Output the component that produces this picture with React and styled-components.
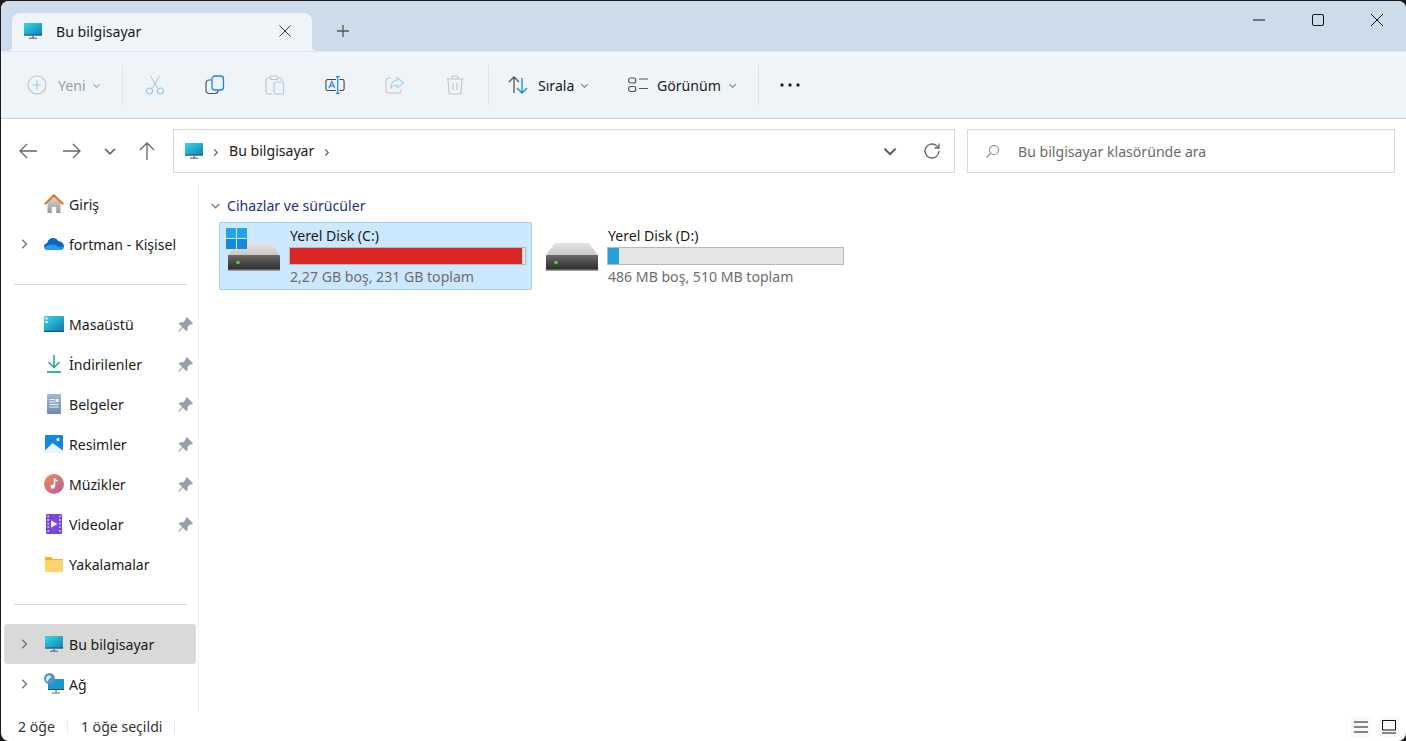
import React from "react";
import styled, { createGlobalStyle } from "styled-components";

const Global = createGlobalStyle`
  html, body {
    margin: 0;
    padding: 0;
    height: 100%;
    background: #1c1c1c;
    overflow: hidden;
  }
  * {
    box-sizing: border-box;
  }
`;

const Win = styled.div`
  margin: 1px 0 0 1px;
  width: 1405px;
  height: 740px;
  background: #fff;
  border-radius: 8px;
  overflow: hidden;
  display: flex;
  flex-direction: column;
  font-family: "Noto Sans", "Open Sans", sans-serif;
  font-size: 14.1px;
  color: #1a1a1a;
`;

const TitleBar = styled.div`
  height: 50px;
  flex: none;
  background: #cddcea;
  display: flex;
  align-items: flex-end;
  padding-left: 11px;
`;

const Tab = styled.div`
  position: relative;
  width: 300px;
  height: 38px;
  background: #eff4f9;
  border-radius: 8px 8px 0 0;
  display: flex;
  align-items: center;
  padding: 0 21px 2px 12px;

  &::before,
  &::after {
    content: "";
    position: absolute;
    bottom: 0;
    width: 5px;
    height: 5px;
  }
  &::before {
    left: -5px;
    background: radial-gradient(circle at 0 0, transparent 5px, #eff4f9 5.5px);
  }
  &::after {
    right: -5px;
    background: radial-gradient(circle at 100% 0, transparent 5px, #eff4f9 5.5px);
  }
`;

const TabLabel = styled.span`
  margin-left: 14px;
  flex: 1;
`;

const NewTab = styled.div`
  margin: 0 0 10px 21px;
  width: 20px;
  height: 20px;
  display: flex;
  align-items: center;
  justify-content: center;
`;

const WinControls = styled.div`
  margin-left: auto;
  align-self: flex-start;
  display: flex;
  padding: 9px 0 0 0;
`;

const WinBtn = styled.div`
  width: 59px;
  height: 20px;
  display: flex;
  align-items: center;
  justify-content: center;
`;

const Toolbar = styled.div`
  height: 68px;
  flex: none;
  background: #eff4f9;
  border-bottom: 1px solid #bccfe2;
  border-top: 1px solid #dfe8f1;
  display: flex;
  align-items: center;
  padding-left: 26px;
`;

const ToolText = styled.div`
  display: flex;
  align-items: center;
  width: ${(p) => p.$w}px;
  color: ${(p) => (p.$off ? "#9b9b9b" : "#1a1a1a")};
`;

const ToolLabel = styled.span`
  margin: 0 ${(p) => p.$after || 6}px 0 ${(p) => p.$before || 10}px;
`;

const ToolIcon = styled.div`
  width: 60px;
  height: 24px;
  display: flex;
  align-items: center;
  justify-content: center;
`;

const Sep = styled.div`
  width: 1px;
  height: 40px;
  background: #dde3e9;
  margin: ${(p) => p.$m || "0"};
`;

const NavRow = styled.div`
  height: 65px;
  flex: none;
  display: flex;
  align-items: center;
  padding: 0 0 1px 0;
`;

const NavBtn = styled.div`
  width: ${(p) => p.$w}px;
  padding-left: ${(p) => p.$pad || 0}px;
  height: 22px;
  display: flex;
  align-items: center;
  justify-content: center;
`;

const AddressBox = styled.div`
  margin-left: 2px;
  width: 782px;
  height: 44px;
  border: 1px solid #d9d9d9;
  display: flex;
  align-items: center;
  padding: 0 10px 0 11px;
`;

const Crumb = styled.span`
  margin: 0 9px 0 8px;
`;

const CrumbText = styled.span`
  padding-bottom: 2px;
`;

const AddressTools = styled.div`
  margin-left: auto;
  display: flex;
  align-items: center;
  gap: 25px;
  padding-right: 3px;
`;

const SearchBox = styled.div`
  margin-left: 12px;
  width: 428px;
  height: 44px;
  border: 1px solid #d9d9d9;
  display: flex;
  align-items: center;
  padding-left: 17px;
  gap: 18px;
  color: #6b6b6b;
`;

const Main = styled.div`
  flex: 1;
  min-height: 0;
  display: flex;
`;

const Sidebar = styled.div`
  width: 198px;
  flex: none;
  border-right: 1px solid #f0f0f0;
  padding: 0 2px 0 3px;
`;

const NavItem = styled.div`
  height: 40px;
  display: flex;
  align-items: center;
  border-radius: 4px;
  background: ${(p) => (p.$active ? "#d9d9d9" : "transparent")};
`;

const Expander = styled.div`
  width: 40px;
  flex: none;
  display: flex;
  justify-content: center;
`;

const ItemIcon = styled.div`
  width: 20px;
  height: 20px;
  flex: none;
  display: flex;
  align-items: center;
  justify-content: center;
`;

const ItemLabel = styled.span`
  margin-left: 5px;
  flex: 1;
  white-space: nowrap;
`;

const PinSlot = styled.div`
  width: 18px;
  flex: none;
  display: flex;
  align-items: center;
`;

const SideRule = styled.div`
  height: 1px;
  background: #d9d9d9;
  margin: 20px 9px 19px 10px;
`;

const Content = styled.div`
  flex: 1;
  padding: 10px 0 0 11px;
`;

const GroupHead = styled.div`
  height: 22px;
  display: flex;
  align-items: center;
  gap: 6px;
  color: #1f2f86;
`;

const Tiles = styled.div`
  display: flex;
  margin: 6px 0 0 9px;
  gap: 5px;
`;

const Tile = styled.div`
  width: 313px;
  height: 68px;
  display: flex;
  align-items: center;
  padding: 0 5px 0 6px;
  gap: 8px;
  background: ${(p) => (p.$sel ? "#cce8ff" : "transparent")};
  border: 1px solid ${(p) => (p.$sel ? "#99d1ff" : "transparent")};
  border-radius: 2px;
`;

const DriveSlot = styled.div`
  width: 55px;
  height: 56px;
  flex: none;
  position: relative;
  display: flex;
  align-items: flex-end;
  justify-content: center;
  padding-bottom: 13px;
`;

const WinLogo = styled.svg`
  position: absolute;
  left: 0;
  top: 0;
`;

const TileBody = styled.div`
  width: 237px;
  display: flex;
  flex-direction: column;
`;

const DriveName = styled.div`
  height: 23px;
  line-height: 23px;
  padding-left: 1px;
`;

const BarTrack = styled.div`
  height: 18px;
  border: 1px solid #b9b9b9;
  background: #e6e6e6;
`;

const BarFill = styled.div`
  height: 100%;
  background: ${(p) => p.$color};
`;

const DriveInfo = styled.div`
  height: 24px;
  line-height: 24px;
  color: #6d6d6d;
  padding-left: 1px;
`;

const StatusBar = styled.div`
  height: 29px;
  flex: none;
  display: flex;
  align-items: center;
  padding: 0 7px 0 17px;
  color: #333;
`;

const StatusSep = styled.div`
  width: 1px;
  height: 14px;
  background: #eaeaea;
  margin: 0 13px 0 12px;
`;

const ViewSwitch = styled.div`
  margin-left: auto;
  display: flex;
  gap: 8px;
`;

const ViewBtn = styled.div`
  width: 20px;
  height: 20px;
  background: #f7f7f7;
  border-radius: 2px;
  display: flex;
  align-items: center;
  justify-content: center;
`;

const Chev = ({ dir = "down", size = 10, color = "#777", w = 1.2 }) => {
  const d = {
    down: "M1.5 3.5 5 7l3.5-3.5",
    right: "M3.5 1.5 7 5 3.5 8.5",
  }[dir];
  return (
    <svg width={size} height={size} viewBox="0 0 10 10" fill="none">
      <path d={d} stroke={color} strokeWidth={w} />
    </svg>
  );
};

const Monitor = ({ id }) => (
  <svg width="18" height="18" viewBox="0 0 18 18">
    <defs>
      <linearGradient id={id} x1="0" y1="0" x2="1" y2="1">
        <stop offset="0" stopColor="#35dbe4" />
        <stop offset="1" stopColor="#0f7fb8" />
      </linearGradient>
    </defs>
    <rect x="0" y="1" width="18" height="12.5" fill={`url(#${id})`} />
    <rect x="0" y="12.5" width="18" height="1" fill="#23506d" />
    <rect x="8.3" y="13.5" width="1.6" height="2.5" fill="#6f7f8a" />
    <rect x="5" y="15.7" width="8" height="1" fill="#4f5d68" />
  </svg>
);

const HomeIcon = () => (
  <svg width="20" height="20" viewBox="0 0 20 20">
    <defs>
      <linearGradient id="homeWall" x1="0" y1="0" x2="0" y2="1">
        <stop offset="0" stopColor="#d5d5d5" />
        <stop offset="1" stopColor="#9a9a9a" />
      </linearGradient>
    </defs>
    <path d="M3.5 9 10 3l6.5 6v10h-4.3v-6H7.8v6H3.5z" fill="url(#homeWall)" />
    <path d="M.8 10.300 10 1.400l9.200 8.900" fill="none" stroke="#e8761c" strokeWidth="2.200" />
  </svg>
);

const CloudIcon = () => (
  <svg width="20" height="14" viewBox="0 0 20 14">
    <path d="M4 13C1.6 13 0 11.5 0 9.6 0 7.8 1.3 6.5 3 6.3 3.8 3 6.200 1 9 1c2.400 0 4.300 1.200 5.300 3.300C17.300 4.300 20 6.400 20 9.300 20 11.500 18.500 13 16.300 13z" fill="#0f65c0" />
    <path d="M4 13C1.600 13 0 11.500 0 9.800c3-.6 5-2 7.600-2.300 3-.3 5 1.300 7 2.200 2 .9 3.700.3 5.400-.4 0 2.200-1.500 3.700-3.700 3.700z" fill="#2a9aea" />
  </svg>
);

const DesktopIcon = () => (
  <svg width="20" height="18" viewBox="0 0 20 18">
    <defs>
      <linearGradient id="deskFill" x1="0" y1="0" x2="1" y2="1">
        <stop offset="0" stopColor="#35dbe4" />
        <stop offset="1" stopColor="#1175b5" />
      </linearGradient>
    </defs>
    <rect width="20" height="16" y="1" rx="1" fill="url(#deskFill)" />
    <rect width="20" height="1.200" y="15.800" fill="#1a4f72" />
    <rect x="1.500" y="2.500" width="2" height="2" fill="#fff" />
    <rect x="1.500" y="6" width="2" height="2" fill="#fff" />
  </svg>
);

const DownloadIcon = () => (
  <svg width="16" height="20" viewBox="0 0 16 20" fill="none">
    <path d="M8 1v12M2.500 8 8 13.500 13.500 8" stroke="#22ad8c" strokeWidth="1.600" />
    <path d="M1 18h14" stroke="#22ad8c" strokeWidth="1.800" />
  </svg>
);

const DocIcon = () => (
  <svg width="15" height="20" viewBox="0 0 15 20">
    <defs>
      <linearGradient id="docFill" x1="0" y1="0" x2="0" y2="1">
        <stop offset="0" stopColor="#a2b9d4" />
        <stop offset="1" stopColor="#6e8cb0" />
      </linearGradient>
    </defs>
    <rect width="14" height="20" rx="1" fill="url(#docFill)" />
    <path d="M2.500 5.500h5M2.500 8h5M2.500 10.500h9M2.500 13h9" stroke="#f2f5f9" strokeWidth="1" />
    <rect x="8.500" y="5" width="3" height="3" fill="#f2f5f9" />
  </svg>
);

const PicIcon = () => (
  <svg width="18" height="18" viewBox="0 0 18 18">
    <rect width="18" height="18" rx="1" fill="#1787dd" />
    <circle cx="13" cy="4.500" r="1.500" fill="#fff" />
    <path d="M0 15.500 7.500 8 18 15.500V18H0z" fill="#e8f3fc" />
  </svg>
);

const MusicIcon = () => (
  <svg width="20" height="20" viewBox="0 0 20 20">
    <defs>
      <linearGradient id="musicFill" x1="0" y1="0" x2="1" y2="1">
        <stop offset="0" stopColor="#ec8b4c" />
        <stop offset="1" stopColor="#ba5fa8" />
      </linearGradient>
    </defs>
    <circle cx="10" cy="10" r="10" fill="url(#musicFill)" />
    <path d="M10.500 4.500v8" stroke="#fff" strokeWidth="1.400" />
    <path d="M10.500 4.500c.4 1.800 2 2 3 2.600" stroke="#fff" strokeWidth="1.400" fill="none" />
    <circle cx="8.600" cy="12.700" r="2.100" fill="#fff" />
  </svg>
);

const VideoIcon = () => (
  <svg width="16" height="20" viewBox="0 0 16 20">
    <rect width="16" height="20" rx="1" fill="#7c46d8" />
    <path d="M2.200 1.500v17M13.800 1.500v17" stroke="#d5c3f5" strokeWidth="1.600" strokeDasharray="1.800 1.800" />
    <path d="M5 6.300v7.400l6.500-3.700z" fill="#f0e8fd" />
  </svg>
);

const FolderIcon = () => (
  <svg width="18" height="15" viewBox="0 0 18 15">
    <path d="M0 1a1 1 0 0 1 1-1h5l2 2h9a1 1 0 0 1 1 1v2H0z" fill="#eeb02f" />
    <rect y="3" width="18" height="12" rx="1" fill="#fdd36b" />
  </svg>
);

const NetworkIcon = () => (
  <svg width="20" height="22" viewBox="0 0 20 22">
    <rect x="4" y="6" width="16" height="11" fill="#1a98cf" />
    <rect x="4" y="16" width="16" height="1" fill="#1b4f70" />
    <rect x="11.300" y="17" width="1.500" height="2.500" fill="#7b8a95" />
    <rect x="8" y="19.500" width="8" height="1" fill="#5d6b76" />
    <circle cx="5.500" cy="5.500" r="5.500" fill="#5a95c2" />
    <path d="M3 3.500c1.500-1.500 3.500-1.200 4 0 .5 1.200-1 1.500-2 2.500-1 1-.5 3-2 2.500C1.500 8 2 4.500 3 3.500z" fill="#dff0fa" />
  </svg>
);

const Pin = () => (
  <svg width="15" height="15" viewBox="0 0 14 14">
    <path d="M8.200 0 14 5.800 12.700 7 11.500 6.800 9 9.300 9 12 7.700 13.200 4.600 10.100 1 13.700.3 13.700.3 13 3.900 9.400.8 6.300 2 5 4.700 5 7.200 2.500 7 1.300z" fill="#98a1a9" />
  </svg>
);

const Drive = () => (
  <svg width="52" height="28" viewBox="0 0 52 28">
    <defs>
      <linearGradient id="driveTop" x1="0" y1="0" x2="0" y2="1">
        <stop offset="0" stopColor="#e4e4e4" />
        <stop offset="1" stopColor="#c8c8c8" />
      </linearGradient>
      <linearGradient id="driveFront" x1="0" y1="0" x2="0" y2="1">
        <stop offset="0" stopColor="#6a6a6a" />
        <stop offset="1" stopColor="#262626" />
      </linearGradient>
    </defs>
    <path d="M9 0h34l9 12H0z" fill="url(#driveTop)" />
    <rect x="0" y="12" width="52" height="16" rx="1" fill="url(#driveFront)" />
    <rect x="0" y="26.500" width="52" height="1.500" fill="#9a9a9a" />
    <circle cx="10" cy="19.500" r="1.800" fill="#3be23b" />
  </svg>
);

const Drives = [
  { name: "Yerel Disk (C:)", info: "2,27 GB boş, 231 GB toplam", used: 98.9, color: "#da2626", sel: true },
  { name: "Yerel Disk (D:)", info: "486 MB boş, 510 MB toplam", used: 4.7, color: "#26a0da" },
];

const Quick = [
  { label: "Masaüstü", icon: <DesktopIcon /> },
  { label: "İndirilenler", icon: <DownloadIcon /> },
  { label: "Belgeler", icon: <DocIcon /> },
  { label: "Resimler", icon: <PicIcon /> },
  { label: "Müzikler", icon: <MusicIcon /> },
  { label: "Videolar", icon: <VideoIcon /> },
];

const App = () => (
  <Win>
    <Global />
    <TitleBar>
      <Tab>
        <Monitor id="tabMon" />
        <TabLabel>Bu bilgisayar</TabLabel>
        <svg width="12" height="12" viewBox="0 0 12 12" fill="none">
          <path d="M.5.500l11 11M11.500.500l-11 11" stroke="#333" strokeWidth="1" />
        </svg>
      </Tab>
      <NewTab>
        <svg width="14" height="14" viewBox="0 0 14 14" fill="none">
          <path d="M7 1v12M1 7h12" stroke="#555" strokeWidth="1.300" />
        </svg>
      </NewTab>
      <WinControls>
        <WinBtn>
          <svg width="12" height="12" viewBox="0 0 12 12">
            <path d="M0 6h12" stroke="#111" strokeWidth="1" />
          </svg>
        </WinBtn>
        <WinBtn>
          <svg width="12" height="12" viewBox="0 0 12 12" fill="none">
            <rect x=".5" y=".5" width="11" height="11" rx="1.500" stroke="#111" />
          </svg>
        </WinBtn>
        <WinBtn>
          <svg width="12" height="12" viewBox="0 0 12 12" fill="none">
            <path d="M0 0l12 12M12 0 0 12" stroke="#111" strokeWidth="1" />
          </svg>
        </WinBtn>
      </WinControls>
    </TitleBar>

    <Toolbar>
      <ToolText $w={95} $off>
        <svg width="20" height="20" viewBox="0 0 20 20" fill="none">
          <circle cx="10" cy="10" r="9" stroke="#c3c3c3" strokeWidth="1.200" />
          <path d="M10 5.500v9M5.500 10h9" stroke="#9fcdf2" strokeWidth="1.200" />
        </svg>
        <ToolLabel $before={11}>Yeni</ToolLabel>
        <Chev color="#aaa" size={9} />
      </ToolText>
      <Sep $m="0 2px 0 0" />
      <ToolIcon>
        <svg width="20" height="20" viewBox="0 0 20 20" fill="none">
          <path d="M5.500 1 12.500 13M14.500 1 7.500 13" stroke="#bfc4c9" strokeWidth="1.100" />
          <circle cx="4.500" cy="16" r="3" stroke="#94c7ef" strokeWidth="1.200" />
          <circle cx="15.500" cy="16" r="3" stroke="#94c7ef" strokeWidth="1.200" />
        </svg>
      </ToolIcon>
      <ToolIcon>
        <svg width="20" height="20" viewBox="0 0 20 20" fill="none">
          <rect x="1" y="5" width="12" height="13.500" rx="3" stroke="#555" strokeWidth="1.200" />
          <rect x="7" y="1" width="11.500" height="14" rx="3" fill="#eff4f9" stroke="#1b86e2" strokeWidth="1.300" />
        </svg>
      </ToolIcon>
      <ToolIcon>
        <svg width="20" height="20" viewBox="0 0 20 20" fill="none">
          <path d="M5 3H3a2 2 0 0 0-2 2v12a2 2 0 0 0 2 2h4M13 3h2a2 2 0 0 1 2 2v1" stroke="#c4c4c4" strokeWidth="1.200" />
          <rect x="5.500" y="1" width="7" height="3.500" rx="1" stroke="#c4c4c4" strokeWidth="1.200" />
          <rect x="9" y="7" width="9.500" height="12" rx="2" stroke="#a5d0f3" strokeWidth="1.200" />
        </svg>
      </ToolIcon>
      <ToolIcon>
        <svg width="20" height="20" viewBox="0 0 22 20" fill="none">
          <path d="M12 4H3a2 2 0 0 0-2 2v8a2 2 0 0 0 2 2h9" stroke="#444" strokeWidth="1.200" />
          <path d="M16 4h3a2 2 0 0 1 2 2v8a2 2 0 0 1-2 2h-3" stroke="#444" strokeWidth="1.200" />
          <path d="M4.200 13.500 7.500 6l3.300 7.500M5.400 11h4.300" stroke="#1b86e2" strokeWidth="1.200" />
          <path d="M12 .7h4M12 19.300h4M14 .7v18.600" stroke="#1b86e2" strokeWidth="1.300" />
        </svg>
      </ToolIcon>
      <ToolIcon>
        <svg width="20" height="20" viewBox="0 0 20 20" fill="none">
          <path d="M6 3H3.500A2.500 2.500 0 0 0 1 5.500v10A2.500 2.500 0 0 0 3.500 18h10a2.500 2.500 0 0 0 2.500-2.500V14" stroke="#c8c8c8" strokeWidth="1.200" />
          <path d="M12 2.500 18.500 8 12 13v-3c-3 0-5 1-6.500 3.500C5.500 9 8 6 12 5.500z" stroke="#a5d0f3" strokeWidth="1.200" strokeLinejoin="round" />
        </svg>
      </ToolIcon>
      <ToolIcon>
        <svg width="18" height="20" viewBox="0 0 18 20" fill="none">
          <path d="M.500 4h17M6 4V2.500A1.500 1.500 0 0 1 7.500 1h3A1.500 1.500 0 0 1 12 2.500V4" stroke="#c4c4c4" strokeWidth="1.200" />
          <path d="M2 4l1 13a2 2 0 0 0 2 2h8a2 2 0 0 0 2-2l1-13" stroke="#c4c4c4" strokeWidth="1.200" />
          <path d="M7 8v7M11 8v7" stroke="#c4c4c4" strokeWidth="1.200" />
        </svg>
      </ToolIcon>
      <Sep $m="0 19px 0 3px" />
      <ToolText $w={120}>
        <svg width="20" height="20" viewBox="0 0 20 20" fill="none">
          <path d="M6 18V2M1 7l5-5 5 5" stroke="#555" strokeWidth="1.300" />
          <path d="M14 3v15M9 13l5 5 5-5" stroke="#1b86e2" strokeWidth="1.300" />
        </svg>
        <ToolLabel>Sırala</ToolLabel>
        <Chev color="#777" size={9} />
      </ToolText>
      <ToolText $w={130}>
        <svg width="20" height="20" viewBox="0 0 20 20" fill="none">
          <rect x=".7" y="3" width="7" height="5" rx="2" stroke="#555" strokeWidth="1.200" />
          <rect x=".7" y="11.500" width="7" height="5" rx="2" stroke="#555" strokeWidth="1.200" />
          <path d="M11 4h9M11 13.500h9" stroke="#555" strokeWidth="1.200" />
        </svg>
        <ToolLabel $before={9} $after={7}>Görünüm</ToolLabel>
        <Chev color="#777" size={9} />
      </ToolText>
      <Sep $m="0 1px 0 0" />
      <ToolIcon>
        <svg width="20" height="4" viewBox="0 0 20 4">
          <circle cx="2" cy="2" r="1.700" fill="#222" />
          <circle cx="10" cy="2" r="1.700" fill="#222" />
          <circle cx="18" cy="2" r="1.700" fill="#222" />
        </svg>
      </ToolIcon>
    </Toolbar>

    <NavRow>
      <NavBtn $w={46} $pad={8}>
        <svg width="18" height="16" viewBox="0 0 18 16" fill="none">
          <path d="M18 8H1M8 1 1 8l7 7" stroke="#666" strokeWidth="1.300" />
        </svg>
      </NavBtn>
      <NavBtn $w={50}>
        <svg width="18" height="16" viewBox="0 0 18 16" fill="none">
          <path d="M0 8h17M10 1l7 7-7 7" stroke="#666" strokeWidth="1.300" />
        </svg>
      </NavBtn>
      <NavBtn $w={26}>
        <Chev size={14} color="#666" />
      </NavBtn>
      <NavBtn $w={48}>
        <svg width="16" height="18" viewBox="0 0 16 18" fill="none">
          <path d="M8 18V1M1 8l7-7 7 7" stroke="#666" strokeWidth="1.300" />
        </svg>
      </NavBtn>
      <AddressBox>
        <Monitor id="addrMon" />
        <Crumb>
          <Chev dir="right" size={9} color="#555" />
        </Crumb>
        <CrumbText>Bu bilgisayar</CrumbText>
        <Crumb>
          <Chev dir="right" size={9} color="#555" />
        </Crumb>
        <AddressTools>
          <Chev size={16} color="#555" />
          <svg width="18" height="18" viewBox="0 0 18 18" fill="none">
            <path d="M16 9a7 7 0 1 1-2.200-5.100L16 6" stroke="#666" strokeWidth="1.300" />
            <path d="M16 1.500V6h-4.500" stroke="#666" strokeWidth="1.300" />
          </svg>
        </AddressTools>
      </AddressBox>
      <SearchBox>
        <svg width="15" height="15" viewBox="0 0 15 15" fill="none">
          <circle cx="9" cy="6" r="4.500" stroke="#888" strokeWidth="1.100" />
          <path d="M5.800 9.200 1.500 13.500" stroke="#888" strokeWidth="1.100" />
        </svg>
        <span>Bu bilgisayar klasöründe ara</span>
      </SearchBox>
    </NavRow>

    <Main>
      <Sidebar>
        <NavItem>
          <Expander />
          <ItemIcon>
            <HomeIcon />
          </ItemIcon>
          <ItemLabel>Giriş</ItemLabel>
        </NavItem>
        <NavItem>
          <Expander>
            <Chev dir="right" size={12} />
          </Expander>
          <ItemIcon>
            <CloudIcon />
          </ItemIcon>
          <ItemLabel>fortman - Kişisel</ItemLabel>
        </NavItem>
        <SideRule />
        {Quick.map((q) => (
          <NavItem key={q.label}>
            <Expander />
            <ItemIcon>{q.icon}</ItemIcon>
            <ItemLabel>{q.label}</ItemLabel>
            <PinSlot>
              <Pin />
            </PinSlot>
          </NavItem>
        ))}
        <NavItem>
          <Expander />
          <ItemIcon>
            <FolderIcon />
          </ItemIcon>
          <ItemLabel>Yakalamalar</ItemLabel>
        </NavItem>
        <SideRule />
        <NavItem $active>
          <Expander>
            <Chev dir="right" size={12} />
          </Expander>
          <ItemIcon>
            <Monitor id="sideMon" />
          </ItemIcon>
          <ItemLabel>Bu bilgisayar</ItemLabel>
        </NavItem>
        <NavItem>
          <Expander>
            <Chev dir="right" size={12} />
          </Expander>
          <ItemIcon>
            <NetworkIcon />
          </ItemIcon>
          <ItemLabel>Ağ</ItemLabel>
        </NavItem>
      </Sidebar>

      <Content>
        <GroupHead>
          <Chev size={11} color="#777" />
          <span>Cihazlar ve sürücüler</span>
        </GroupHead>
        <Tiles>
          {Drives.map((d) => (
            <Tile key={d.name} $sel={d.sel}>
              <DriveSlot>
                <Drive />
                {d.sel && (
                  <WinLogo width="21" height="21" viewBox="0 0 21 21">
                    <rect width="10" height="10" fill="#24a2ea" />
                    <rect x="11" width="10" height="10" fill="#24a2ea" />
                    <rect y="11" width="10" height="10" fill="#1489dd" />
                    <rect x="11" y="11" width="10" height="10" fill="#1489dd" />
                  </WinLogo>
                )}
              </DriveSlot>
              <TileBody>
                <DriveName>{d.name}</DriveName>
                <BarTrack>
                  <BarFill $color={d.color} style={{ width: `${d.used}%` }} />
                </BarTrack>
                <DriveInfo>{d.info}</DriveInfo>
              </TileBody>
            </Tile>
          ))}
        </Tiles>
      </Content>
    </Main>

    <StatusBar>
      <span>2 öğe</span>
      <StatusSep />
      <span>1 öğe seçildi</span>
      <StatusSep />
      <ViewSwitch>
        <ViewBtn>
          <svg width="14" height="12" viewBox="0 0 14 12">
            <path d="M0 1h14M0 6h14M0 11h14" stroke="#111" strokeWidth="1" />
          </svg>
        </ViewBtn>
        <ViewBtn>
          <svg width="14" height="14" viewBox="0 0 14 14" fill="none">
            <rect x=".5" y=".5" width="13" height="9.500" stroke="#111" />
            <path d="M0 13h14" stroke="#111" />
          </svg>
        </ViewBtn>
      </ViewSwitch>
    </StatusBar>
  </Win>
);

export default App;
